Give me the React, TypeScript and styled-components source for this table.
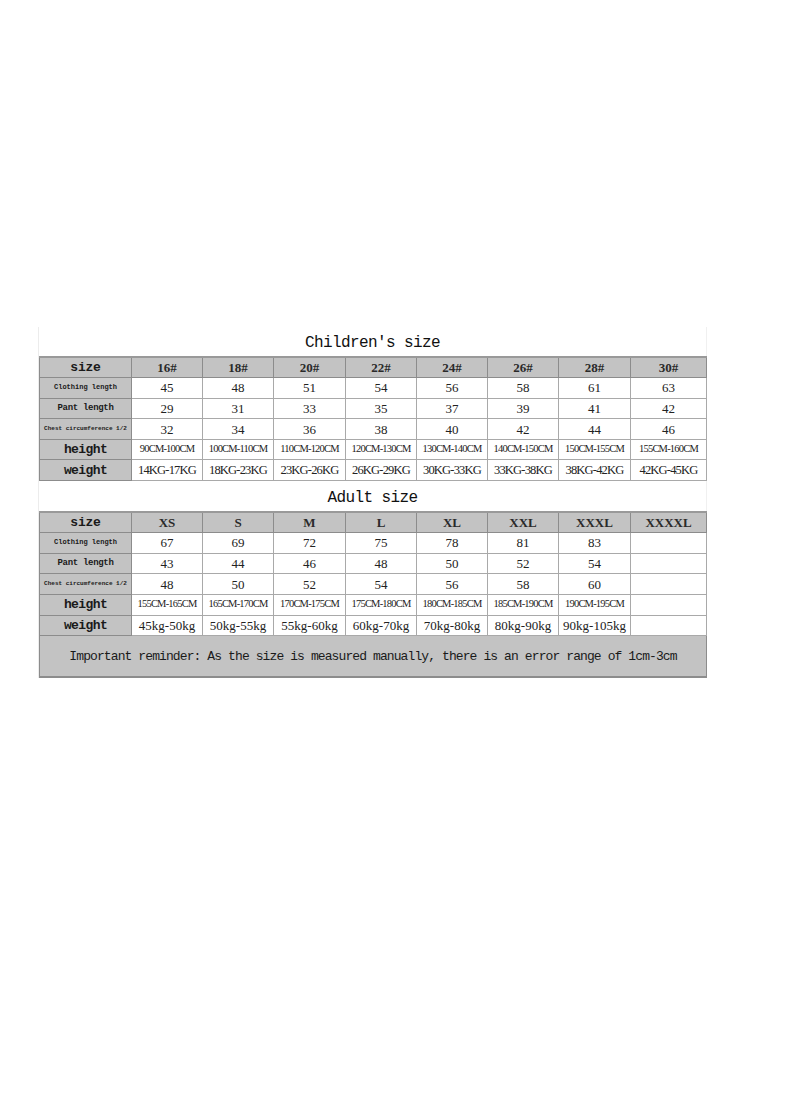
import React from 'react';
import styled, { createGlobalStyle } from 'styled-components';

const GlobalStyle = createGlobalStyle`
  html, body {
    margin: 0;
    padding: 0;
    background: #fff;
  }
  body {
    font-family: "Liberation Serif", serif;
    color: #111;
  }
`;

const Page = styled.div`
  width: 800px;
  height: 1096px;
  padding-top: 327px;
  box-sizing: border-box;
`;

const Sheet = styled.div`
  margin-left: 38px;
  width: 667px;
  border-left: 1px solid #ececec;
  border-right: 1px solid #f0f0f0;
`;

const Title = styled.div<{ $h: number }>`
  height: ${(p) => p.$h}px;
  display: flex;
  align-items: center;
  justify-content: center;
  font-family: "Liberation Mono", monospace;
  font-size: 16px;
  letter-spacing: -0.6px;
  color: #111;
  padding-top: 3px;
  box-sizing: border-box;
`;

const Table = styled.table`
  width: 667px;
  table-layout: fixed;
  border-collapse: collapse;
  border-top: 2px solid #999;
`;

const Row = styled.tr`
  height: 20.6px;
`;

const Label = styled.th<{ $size: number; $ls?: number; $weight?: number }>`
  background: #c3c3c3;
  border: 1px solid #8c8c8c;
  padding: 0;
  font-family: "Liberation Mono", monospace;
  font-size: ${(p) => p.$size}px;
  letter-spacing: ${(p) => p.$ls ?? 0}px;
  font-weight: ${(p) => p.$weight ?? 700};
  color: #1a1a1a;
  white-space: nowrap;
  text-align: center;
  line-height: 1;
`;

const Head = styled.th`
  background: #c3c3c3;
  border: 1px solid #8c8c8c;
  padding: 0;
  font-family: "Liberation Serif", serif;
  font-size: 13px;
  font-weight: 700;
  color: #2a2a2a;
  text-align: center;
  line-height: 1;
`;

const Cell = styled.td<{ $size?: number; $ls?: number }>`
  border: 1px solid #a9a9a9;
  padding: 0;
  font-family: "Liberation Serif", serif;
  font-size: ${(p) => p.$size ?? 13}px;
  letter-spacing: ${(p) => p.$ls ?? 0}px;
  color: #222;
  text-align: center;
  white-space: nowrap;
  line-height: 1;
`;

const Reminder = styled.td`
  height: 40px;
  background: #c3c3c3;
  border: 1px solid #8c8c8c;
  border-bottom: 2px solid #8c8c8c;
  padding: 0;
  font-family: "Liberation Mono", monospace;
  font-size: 13px;
  letter-spacing: -0.9px;
  color: #1a1a1a;
  text-align: center;
  white-space: nowrap;
`;

const colWidths = [92, 71, 71, 72, 71, 71, 71, 72, 76];

const Cols = () => (
  <colgroup>
    {colWidths.map((w, i) => (
      <col key={i} style={{ width: w }} />
    ))}
  </colgroup>
);

type Section = {
  sizes: string[];
  clothing: string[];
  pant: string[];
  chest: string[];
  height: string[];
  weight: string[];
  weightSize: number;
  weightLs: number;
};

const children: Section = {
  sizes: ['16#', '18#', '20#', '22#', '24#', '26#', '28#', '30#'],
  clothing: ['45', '48', '51', '54', '56', '58', '61', '63'],
  pant: ['29', '31', '33', '35', '37', '39', '41', '42'],
  chest: ['32', '34', '36', '38', '40', '42', '44', '46'],
  height: [
    '90CM-100CM',
    '100CM-110CM',
    '110CM-120CM',
    '120CM-130CM',
    '130CM-140CM',
    '140CM-150CM',
    '150CM-155CM',
    '155CM-160CM',
  ],
  weight: [
    '14KG-17KG',
    '18KG-23KG',
    '23KG-26KG',
    '26KG-29KG',
    '30KG-33KG',
    '33KG-38KG',
    '38KG-42KG',
    '42KG-45KG',
  ],
  weightSize: 12.5,
  weightLs: -0.8,
};

const adult: Section = {
  sizes: ['XS', 'S', 'M', 'L', 'XL', 'XXL', 'XXXL', 'XXXXL'],
  clothing: ['67', '69', '72', '75', '78', '81', '83', ''],
  pant: ['43', '44', '46', '48', '50', '52', '54', ''],
  chest: ['48', '50', '52', '54', '56', '58', '60', ''],
  height: [
    '155CM-165CM',
    '165CM-170CM',
    '170CM-175CM',
    '175CM-180CM',
    '180CM-185CM',
    '185CM-190CM',
    '190CM-195CM',
    '',
  ],
  weight: [
    '45kg-50kg',
    '50kg-55kg',
    '55kg-60kg',
    '60kg-70kg',
    '70kg-80kg',
    '80kg-90kg',
    '90kg-105kg',
    '',
  ],
  weightSize: 13,
  weightLs: 0,
};

const SizeRows = ({ data }: { data: Section }) => (
  <>
    <Row>
      <Label $size={13} $ls={-0.2} $weight={600}>
        size
      </Label>
      {data.sizes.map((s, i) => (
        <Head key={i}>{s}</Head>
      ))}
    </Row>
    <Row>
      <Label $size={7}>Clothing length</Label>
      {data.clothing.map((v, i) => (
        <Cell key={i}>{v}</Cell>
      ))}
    </Row>
    <Row>
      <Label $size={9} $ls={-0.3} $weight={600}>
        Pant length
      </Label>
      {data.pant.map((v, i) => (
        <Cell key={i}>{v}</Cell>
      ))}
    </Row>
    <Row>
      <Label $size={6}>Chest circumference 1/2</Label>
      {data.chest.map((v, i) => (
        <Cell key={i}>{v}</Cell>
      ))}
    </Row>
    <Row>
      <Label $size={13} $ls={-0.6}>
        height
      </Label>
      {data.height.map((v, i) => (
        <Cell key={i} $size={10.5} $ls={-0.8}>
          {v}
        </Cell>
      ))}
    </Row>
    <Row>
      <Label $size={13} $ls={-0.6}>
        weight
      </Label>
      {data.weight.map((v, i) => (
        <Cell key={i} $size={data.weightSize} $ls={data.weightLs}>
          {v}
        </Cell>
      ))}
    </Row>
  </>
);

export default function App() {
  return (
    <Page>
      <GlobalStyle />
      <Sheet>
        <Title $h={29}>Children's size</Title>
        <Table>
          <Cols />
          <tbody>
            <SizeRows data={children} />
          </tbody>
        </Table>
        <Title $h={30}>Adult size</Title>
        <Table>
          <Cols />
          <tbody>
            <SizeRows data={adult} />
            <tr>
              <Reminder colSpan={9}>
                Important reminder: As the size is measured manually, there is an error range of 1cm-3cm
              </Reminder>
            </tr>
          </tbody>
        </Table>
      </Sheet>
    </Page>
  );
}
